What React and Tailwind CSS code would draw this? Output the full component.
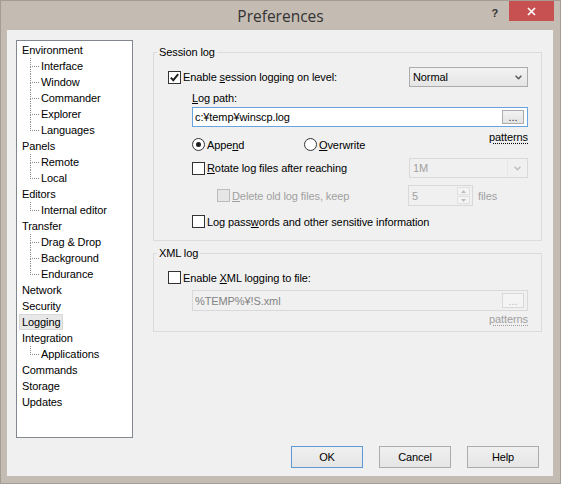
import React from "react";

// ---------- data ----------
const TREE = [
  { label: "Environment", children: ["Interface", "Window", "Commander", "Explorer", "Languages"] },
  { label: "Panels", children: ["Remote", "Local"] },
  { label: "Editors", children: ["Internal editor"] },
  { label: "Transfer", children: ["Drag & Drop", "Background", "Endurance"] },
  { label: "Network" },
  { label: "Security" },
  { label: "Logging", selected: true },
  { label: "Integration", children: ["Applications"] },
  { label: "Commands" },
  { label: "Storage" },
  { label: "Updates" },
];

// ---------- small controls ----------
function CheckBox({ checked = false, disabled = false }) {
  return (
    <span
      className={
        disabled
          ? "w-[13px] h-[13px] shrink-0 border border-[#bcbcbc] bg-[#e6e6e6]"
          : "w-[13px] h-[13px] shrink-0 border border-[#333333] bg-white flex items-center justify-center"
      }
    >
      {checked && (
        <svg width="11" height="11" viewBox="0 0 11 11">
          <path d="M1.8 5.6 L4.3 8.2 L9.2 2.2" fill="none" stroke="#1e1e1e" strokeWidth="1.9" />
        </svg>
      )}
    </span>
  );
}

function Radio({ checked = false }) {
  return (
    <span className="w-[13px] h-[13px] shrink-0 rounded-full border border-[#333333] bg-white flex items-center justify-center">
      {checked && <span className="w-[5px] h-[5px] rounded-full bg-[#1e1e1e]" />}
    </span>
  );
}

function Chevron({ color }) {
  return (
    <svg width="7" height="5" viewBox="0 0 7 5">
      <path d="M0.6 0.8 L3.5 3.8 L6.4 0.8" fill="none" stroke={color} strokeWidth="1.4" />
    </svg>
  );
}

function DotsButton({ disabled = false }) {
  return (
    <span
      className={
        disabled
          ? "w-[22px] h-[15px] border border-[#d9d9d9] bg-[#f4f4f4] text-[#bcbcbc] flex items-end justify-center leading-[12px]"
          : "w-[22px] h-[14px] border border-[#adadad] bg-linear-to-b from-[#f2f2f2] to-[#e3e3e3] text-[#333333] flex items-end justify-center leading-[12px]"
      }
    >
      ...
    </span>
  );
}

// ---------- tree ----------
function Tree() {
  return (
    <div className="w-[117px] h-[398px] border border-[#828790] bg-white pt-[1px]">
      {TREE.map((node) => (
        <div key={node.label}>
          {node.selected ? (
            <div className="h-[16px] pl-[2px] flex">
              <span className="h-[16px] leading-[14px] px-[2px] border border-[#d9d9d9] bg-[#e8e8e8]">
                {node.label}
              </span>
            </div>
          ) : (
            <div className="h-[16px] pl-[5px] leading-[16px]">{node.label}</div>
          )}
          {node.children &&
            node.children.map((child, i) => {
              const last = i === node.children.length - 1;
              return (
                <div key={child} className="h-[16px] flex">
                  <div className="ml-[13px] w-[9px] flex flex-col">
                    <div className="h-[9px] border-l border-b border-dotted border-[#8c8c8c]" />
                    {!last && <div className="h-[7px] border-l border-dotted border-[#8c8c8c]" />}
                  </div>
                  <span className="ml-[2px] leading-[16px]">{child}</span>
                </div>
              );
            })}
        </div>
      ))}
    </div>
  );
}

// ---------- logging page ----------
function SessionLog() {
  return (
    <fieldset className="border border-[#dcdcdc]">
      <legend className="ml-[3px] px-[2px] leading-[16px]">Session log</legend>
      <div className="pl-[14px] pr-[13px] pb-[12px]">
        <div className="mt-[7px] h-[20px] flex items-center">
          <CheckBox checked />
          <span className="ml-[2px]">
            Enable <u>s</u>ession logging on level:
          </span>
          <div className="ml-auto w-[119px] h-[20px] border border-[#acacac] bg-linear-to-b from-[#f2f2f2] to-[#e5e5e5] flex items-center pl-[3px] pr-[5px]">
            <span>Normal</span>
            <span className="ml-auto flex">
              <Chevron color="#555555" />
            </span>
          </div>
        </div>

        <div className="pl-[24px]">
          <div className="mt-[4px] h-[14px] leading-[14px]">
            <u>L</u>og path:
          </div>
          <div className="mt-[2px] h-[20px] border border-[#66a3e0] bg-white flex items-center pl-[2px] pr-[3px]">
            <span>c:¥temp¥winscp.log</span>
            <span className="ml-auto flex">
              <DotsButton />
            </span>
          </div>

          <div className="mt-[3px] h-[22px] flex items-start">
            <div className="mt-[8px] w-[112px] h-[13px] flex items-center">
              <Radio checked />
              <span className="ml-[2px]">
                Appe<u>n</u>d
              </span>
            </div>
            <div className="mt-[8px] h-[13px] flex items-center">
              <Radio />
              <span className="ml-[2px]">
                <u>O</u>verwrite
              </span>
            </div>
            <span className="ml-auto leading-[14px] underline decoration-dotted underline-offset-2">patterns</span>
          </div>

          <div className="mt-[6px] h-[20px] flex items-center">
            <CheckBox />
            <span className="ml-[2px]">
              <u>R</u>otate log files after reaching
            </span>
            <div className="ml-auto w-[119px] h-[20px] border border-[#d9d9d9] bg-[#f0f0f0] flex items-center text-[#a0a0a0]">
              <span className="pl-[3px] flex-1">1M</span>
              <span className="w-[20px] h-full border-l border-[#e8e8e8] flex items-center justify-center">
                <Chevron color="#bcbcbc" />
              </span>
            </div>
          </div>

          <div className="mt-[7px] h-[21px] flex items-center">
            <div className="w-[216px] pl-[25px] flex items-center">
              <CheckBox disabled />
              <span className="ml-[2px] text-[#a0a0a0]">
                <u>D</u>elete old log files, keep
              </span>
            </div>
            <div className="w-[65px] h-[21px] border border-[#d9d9d9] bg-[#f0f0f0] flex items-center text-[#a0a0a0]">
              <span className="pl-[3px] flex-1">5</span>
              <span className="mr-[2px] w-[13px] h-[17px] flex flex-col gap-[1px]">
                <span className="flex-1 border border-[#e0e0e0] bg-[#f4f4f4] flex items-center justify-center">
                  <svg width="5" height="3" viewBox="0 0 5 3">
                    <path d="M0 3 L2.5 0 L5 3 Z" fill="#bcbcbc" />
                  </svg>
                </span>
                <span className="flex-1 border border-[#e0e0e0] bg-[#f4f4f4] flex items-center justify-center">
                  <svg width="5" height="3" viewBox="0 0 5 3">
                    <path d="M0 0 L2.5 3 L5 0 Z" fill="#bcbcbc" />
                  </svg>
                </span>
              </span>
            </div>
            <span className="ml-[5px] text-[#a0a0a0]">files</span>
          </div>

          <div className="mt-[9px] h-[13px] flex items-center">
            <CheckBox />
            <span className="ml-[2px]">
              Log pass<u>w</u>ords and other sensitive information
            </span>
          </div>
        </div>
      </div>
    </fieldset>
  );
}

function XmlLog() {
  return (
    <fieldset className="mt-[4px] border border-[#dcdcdc]">
      <legend className="ml-[3px] px-[2px] leading-[16px]">XML log</legend>
      <div className="pl-[14px] pr-[13px] pb-[5px]">
        <div className="mt-[10px] h-[13px] flex items-center">
          <CheckBox />
          <span className="ml-[2px]">
            Enable <u>X</u>ML logging to file:
          </span>
        </div>
        <div className="pl-[24px]">
          <div className="mt-[6px] h-[21px] border border-[#d9d9d9] bg-[#f0f0f0] flex items-center pl-[2px] pr-[3px]">
            <span className="text-[#838383]">%TEMP%¥!S.xml</span>
            <span className="ml-auto flex">
              <DotsButton disabled />
            </span>
          </div>
          <div className="mt-[1px] flex justify-end">
            <span className="leading-[14px] text-[#a0a0a0] underline decoration-dotted underline-offset-2">patterns</span>
          </div>
        </div>
      </div>
    </fieldset>
  );
}

// ---------- dialog ----------
export default function App() {
  return (
    <div className="w-[561px] h-[484px] bg-[#c4bbb2] border border-[#a59c94] flex flex-col font-['Liberation_Sans',Arial,sans-serif] text-[11px] leading-[16px] tracking-[-0.1px] text-black">
      {/* title bar */}
      <div className="h-[29px] relative flex justify-center">
        <span className="mt-[5px] leading-[20px] text-[15.5px] tracking-normal text-[#333333] font-['Open_Sans',sans-serif]">
          Preferences
        </span>
        <span className="absolute right-[62px] top-[7px] text-[11px] leading-[11px] font-bold text-[#333333]">?</span>
        <div className="absolute right-[6px] top-0 w-[45px] h-[20px] bg-[#c75050] flex items-center justify-center">
          <svg width="9" height="9" viewBox="0 0 9 9">
            <path d="M1 1 L8 8 M8 1 L1 8" stroke="white" strokeWidth="1.7" />
          </svg>
        </div>
      </div>

      {/* client */}
      <div className="ml-[6px] w-[546px] h-[446px] bg-[#f0f0f0] flex flex-col">
        <div className="flex items-start pl-[9px] pt-[10px]">
          <Tree />
          <div className="ml-[20px] mt-[4px] w-[389px] flex flex-col">
            <SessionLog />
            <XmlLog />
          </div>
        </div>

        <div className="mt-auto flex justify-end gap-[16px] pr-[14px] pb-[8px]">
          <button className="w-[72px] h-[22px] border border-[#5b9bd5] bg-linear-to-b from-[#f0f0f0] to-[#e5e5e5]">
            OK
          </button>
          <button className="w-[72px] h-[22px] border border-[#acacac] bg-linear-to-b from-[#f0f0f0] to-[#e5e5e5]">
            Cancel
          </button>
          <button className="w-[72px] h-[22px] border border-[#acacac] bg-linear-to-b from-[#f0f0f0] to-[#e5e5e5]">
            Help
          </button>
        </div>
      </div>
    </div>
  );
}
